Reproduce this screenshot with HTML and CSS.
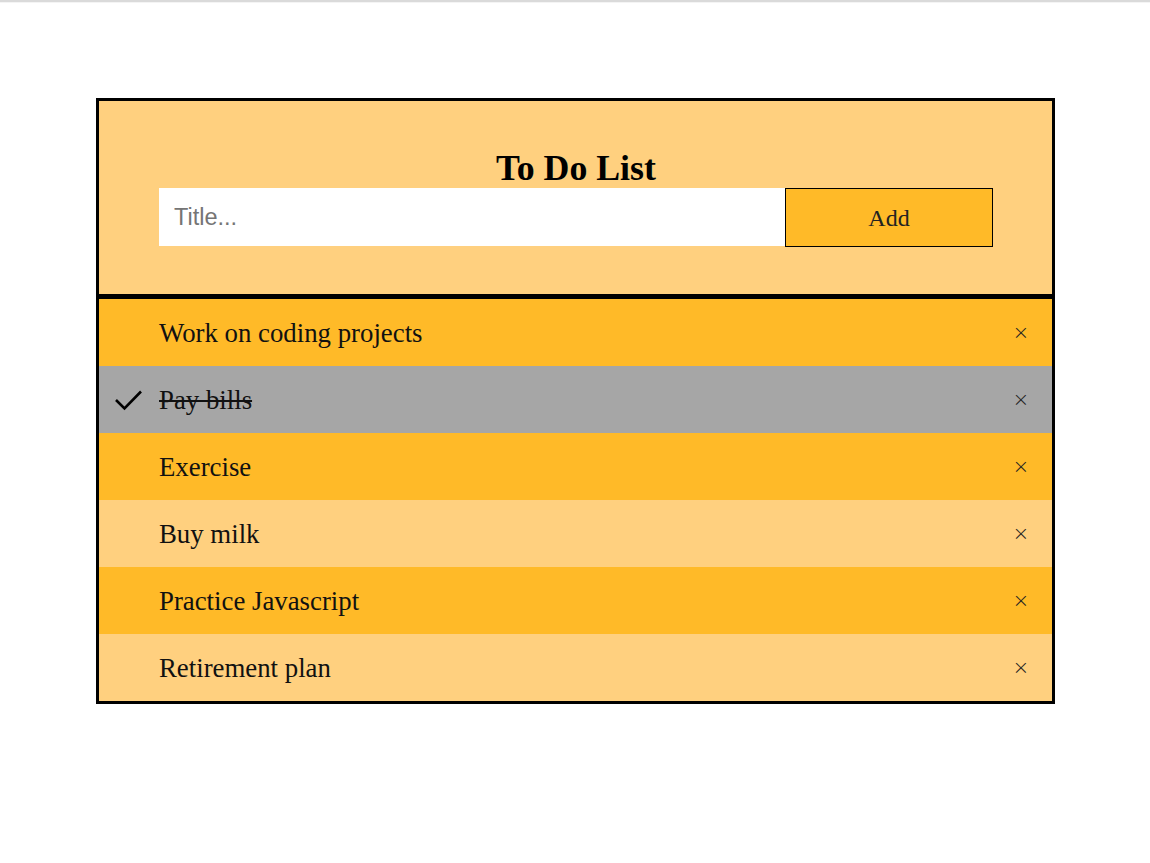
FILE: index.html
```html
<!DOCTYPE html>
<html lang="en">
<head>
<meta charset="utf-8">
<title>To Do List</title>
<link rel="stylesheet" href="styles.css">
</head>
<body>
<div class="topline"></div>
<div class="todo">
  <div class="header">
    <h2 class="title">To Do List</h2>
    <div class="form">
      <input class="field" type="text" placeholder="Title...">
      <button class="add">Add</button>
    </div>
  </div>
  <ul class="list">
    <li class="item dark"><span class="slot"></span><span class="text">Work on coding projects</span><span class="close">×</span></li>
    <li class="item done"><span class="slot"><svg width="30" height="24" viewBox="0 0 30 24"><path d="M2 12 L10.5 20.5 L27 3.5" fill="none" stroke="#000" stroke-width="2.6"/></svg></span><span class="text">Pay bills</span><span class="close">×</span></li>
    <li class="item dark"><span class="slot"></span><span class="text">Exercise</span><span class="close">×</span></li>
    <li class="item light"><span class="slot"></span><span class="text">Buy milk</span><span class="close">×</span></li>
    <li class="item dark"><span class="slot"></span><span class="text">Practice Javascript</span><span class="close">×</span></li>
    <li class="item light"><span class="slot"></span><span class="text">Retirement plan</span><span class="close">×</span></li>
  </ul>
</div>
</body>
</html>
```
FILE: styles.css
```css
* { box-sizing: border-box; }
html, body { margin: 0; padding: 0; background: #fff; }
body { font-family: "Liberation Serif", "Times New Roman", serif; }
.topline { height: 3px; background: #dadada; border-bottom: 1px solid #f4f4f4; }
.todo {
  width: 959px;
  margin: 95px 0 0 96px;
  border: 3px solid #000;
  background: #ffd07f;
}
.header {
  background: #ffd07f;
  padding: 47px 59px 47px 60px;
  border-bottom: 5px solid #000;
}
.title {
  margin: 0;
  text-align: center;
  font-size: 35.8px;
  line-height: 40px;
  height: 40px;
  font-weight: bold;
  color: #000;
}
.form { display: flex; }
.field {
  flex: 1;
  height: 58px;
  border: none;
  outline: none;
  margin: 0;
  padding: 1px 15px 0 15px;
  background: #fff;
  font-family: "Liberation Sans", Arial, sans-serif;
  font-size: 23.5px;
  color: #333;
}
.field::placeholder { color: #757575; }
.add {
  width: 208px;
  height: 59px;
  margin: 0;
  border: 1px solid #000;
  background: #ffba28;
  font-family: "Liberation Serif", "Times New Roman", serif;
  font-size: 24px;
  color: #222;
  padding: 2px 0 0 0;
}
.list { list-style: none; margin: 0; padding: 0; }
.item {
  display: flex;
  align-items: center;
  height: 67px;
  padding-top: 1px;
  font-size: 26.8px;
  color: #111;
}
.dark { background: #ffba28; }
.light { background: #ffd07f; }
.done { background: #a6a6a6; }
.done .text { text-decoration: line-through; text-decoration-thickness: 2px; }
.slot {
  width: 60px;
  flex: none;
  display: flex;
  justify-content: center;
  align-items: center;
}
.slot svg { display: block; }
.text { flex: 1; }
.close {
  width: 60px;
  text-align: center;
  font-family: "DejaVu Sans", sans-serif;
  font-weight: 200;
  font-size: 20px;
  color: #222;
  margin-right: 1px;
  margin-bottom: 2px;
}
```
